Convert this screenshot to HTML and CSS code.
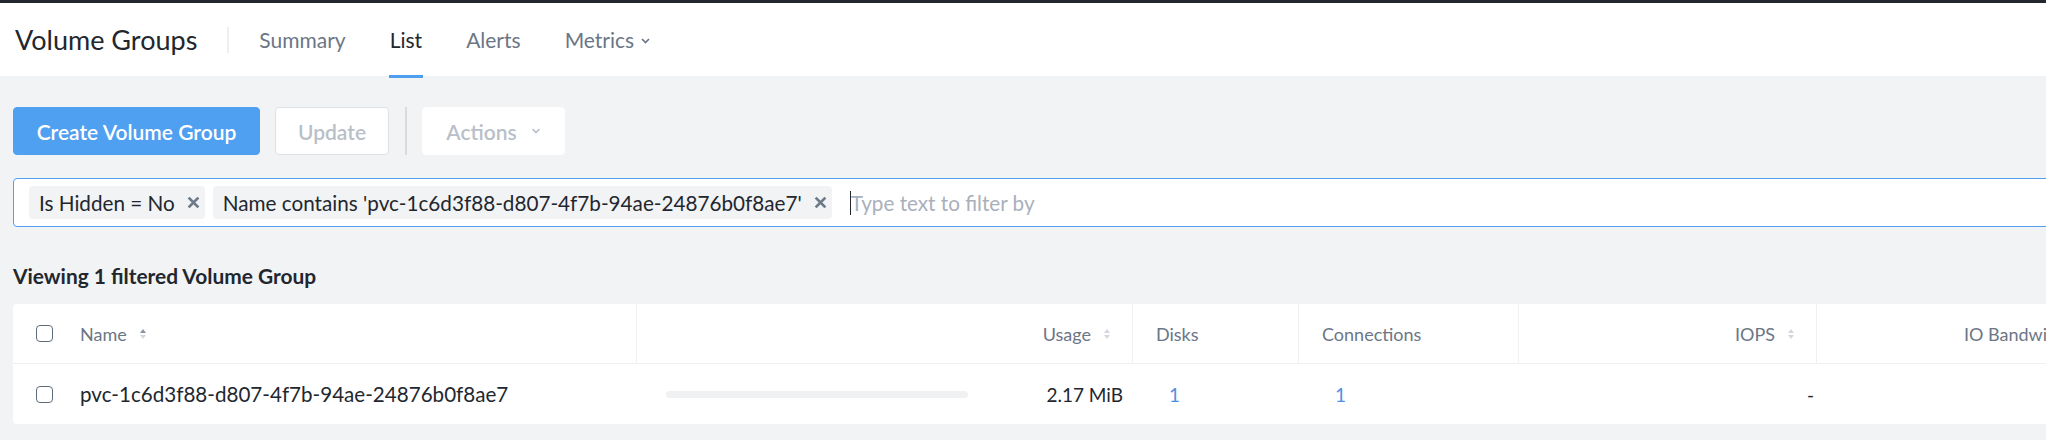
FILE: index.html
```html
<!DOCTYPE html>
<html>
<head>
<meta charset="utf-8">
<link rel="stylesheet" href="styles.css">
</head>
<body>
<div class="topbar"></div>
<header class="header">
  <div class="title">Volume Groups</div>
  <div class="vdivider"></div>
  <nav class="nav">
    <span class="nav-item">Summary</span>
    <span class="nav-item active">List</span>
    <span class="nav-item">Alerts</span>
    <span class="nav-item">Metrics <svg class="chev" width="9" height="6" viewBox="0 0 9 6"><path d="M1 1l3.5 3.5L8 1" fill="none" stroke="#6b7686" stroke-width="1.7"/></svg></span>
  </nav>
</header>
<main class="content">
  <div class="toolbar">
    <button class="btn btn-primary">Create Volume Group</button>
    <button class="btn btn-disabled">Update</button>
    <div class="tsep"></div>
    <button class="btn btn-actions">Actions <svg class="chev2" width="10" height="6" viewBox="0 0 10 6"><path d="M1.5 1l3.5 3.5L8.5 1" fill="none" stroke="#b9bfc8" stroke-width="1.7"/></svg></button>
  </div>
  <div class="filter">
    <span class="chip">Is Hidden = No <svg class="x" width="13" height="13" viewBox="0 0 12 12"><path d="M1.5 1.5l9 9M10.5 1.5l-9 9" stroke="#6f7a89" stroke-width="2.6" stroke-linecap="butt"/></svg></span>
    <span class="chip">Name contains 'pvc-1c6d3f88-d807-4f7b-94ae-24876b0f8ae7' <svg class="x" width="13" height="13" viewBox="0 0 12 12"><path d="M1.5 1.5l9 9M10.5 1.5l-9 9" stroke="#6f7a89" stroke-width="2.6" stroke-linecap="butt"/></svg></span>
    <span class="caret"></span><span class="placeholder">Type text to filter by</span>
  </div>
  <div class="viewing">Viewing 1 filtered Volume Group</div>
  <div class="table">
    <div class="row head">
      <div class="cell c-name"><span class="cb"></span><span class="hname">Name</span><span class="sort"><i class="up dark"></i><i class="down"></i></span></div>
      <div class="cell c-usage right">Usage <span class="sort"><i class="up"></i><i class="down"></i></span></div>
      <div class="cell c-disks">Disks</div>
      <div class="cell c-conn">Connections</div>
      <div class="cell c-iops right">IOPS <span class="sort"><i class="up"></i><i class="down"></i></span></div>
      <div class="cell c-bw">IO Bandwidth <span class="sort"><i class="up"></i><i class="down"></i></span></div>
    </div>
    <div class="row body">
      <div class="cell c-name"><span class="cb"></span><span class="vname">pvc-1c6d3f88-d807-4f7b-94ae-24876b0f8ae7</span></div>
      <div class="cell c-usage b-usage"><span class="bar"></span><span class="usage-val">2.17 MiB</span></div>
      <div class="cell c-disks b-link">1</div>
      <div class="cell c-conn b-link">1</div>
      <div class="cell c-iops b-iops">-</div>
      <div class="cell c-bw"></div>
    </div>
  </div>
</main>
</body>
</html>
```

FILE: styles.css
```css
html, body {
  margin: 0;
  padding: 0;
  overflow: hidden;
  background: #f2f3f5;
  font-family: Lato, "Liberation Sans", sans-serif;
  color: #22272e;
}
.topbar {
  height: 3px;
  background: #22272e;
}
.header {
  height: 73px;
  background: #fff;
  display: flex;
  align-items: center;
  padding-left: 15px;
}
.title {
  font-size: 27px;
  color: #22272e;
}
.vdivider {
  width: 2px;
  height: 26px;
  background: #eceef0;
  margin: 0 30px 0 30px;
}
.nav {
  display: flex;
  gap: 44px;
  height: 100%;
  align-items: center;
}
.nav-item {
  font-size: 21px;
  color: #6b7686;
  position: relative;
  height: 100%;
  display: flex;
  align-items: center;
}
.nav-item.active {
  color: #22272e;
}
.nav-item.active::after {
  content: "";
  position: absolute;
  left: -1px;
  right: -1px;
  bottom: -2px;
  height: 3px;
  background: #4f9ff0;
}
.chev {
  margin-left: 7px;
  margin-top: 3px;
}
.content {
  padding-left: 13px;
  width: 2200px;
}
.toolbar {
  display: flex;
  align-items: center;
  margin-top: 31px;
  height: 48px;
}
.btn {
  height: 48px;
  border-radius: 4px;
  font-family: inherit;
  font-size: 21px;
  font-weight: 600;
  padding: 0;
  border: 1px solid transparent;
  display: flex;
  align-items: center;
  justify-content: center;
}
.btn-primary {
  width: 247px;
  background: #4fa0f0;
  color: #fff;
  border-color: #4fa0f0;
}
.btn-disabled {
  width: 114px;
  margin-left: 15px;
  background: #fff;
  color: #b9bfc8;
  border-color: #dde0e4;
}
.tsep {
  width: 2px;
  height: 48px;
  background: #d8dbdf;
  margin: 0 15px 0 16px;
}
.btn-actions {
  width: 143px;
  background: #fff;
  color: #b9bfc8;
  border-color: #fff;
}
.chev2 {
  margin-left: 14px;
}
.filter {
  margin-top: 23px;
  height: 47px;
  border: 1px solid #4fa0f0;
  border-radius: 4px;
  background: #fff;
  display: flex;
  align-items: center;
  padding-left: 15px;
  gap: 8px;
}
.chip {
  height: 33px;
  background: #f2f3f5;
  border-radius: 4px;
  display: flex;
  align-items: center;
  padding: 0 5px 0 10px;
  font-size: 20.7px;
  color: #22272e;
}
.x {
  margin-left: 12px;
}
.caret {
  width: 1px;
  height: 24px;
  background: #22272e;
  margin-left: 10px;
}
.placeholder {
  font-size: 20.7px;
  color: #a9b0bb;
  margin-left: -8px;
}
.viewing {
  margin-top: 36px;
  font-size: 20.9px;
  font-weight: 700;
  color: #22272e;
  height: 41px;
}
.table {
  background: #fff;
  border-radius: 4px;
  width: 2200px;
}
.row {
  display: grid;
  grid-template-columns: 623px 496px 166px 220px 298px 400px;
}
.row.head {
  height: 59px;
  border-bottom: 1px solid #eef0f2;
}
.row.body {
  height: 60px;
}
.cell {
  display: flex;
  align-items: center;
  font-size: 18px;
  color: #6b7686;
}
.head .cell + .cell {
  border-left: 1px solid #eef0f2;
}
.c-name {
  padding-left: 23px;
}
.cb {
  width: 15px;
  height: 15px;
  border: 1.5px solid #5f6b7a;
  border-radius: 4px;
  margin-right: 27px;
}
.sort {
  display: inline-flex;
  flex-direction: column;
  gap: 2px;
  margin-left: 13px;
}
.sort i {
  display: block;
  width: 0;
  height: 0;
  border-left: 3px solid transparent;
  border-right: 3px solid transparent;
}
.sort i.up {
  border-bottom: 4px solid #d3d7dd;
}
.sort i.down {
  border-top: 4px solid #d3d7dd;
}
.sort i.up.dark {
  border-bottom-color: #8a94a3;
}
.right {
  justify-content: flex-end;
  padding-right: 22px;
}
.c-disks, .c-conn {
  padding-left: 23px;
}
.c-bw {
  padding-left: 147px;
  justify-content: flex-start;
}
.vname {
  font-size: 20.6px;
  color: #22272e;
}
.b-usage {
  justify-content: space-between;
  padding: 0 9px 0 30px;
}
.bar {
  width: 302px;
  height: 7px;
  border-radius: 4px;
  background: #f0f1f3;
}
.usage-val {
  font-size: 19px;
  color: #22272e;
}
.b-link {
  color: #4f8fe0;
  font-size: 19px;
  padding-left: 37px;
}
.b-iops {
  justify-content: flex-end;
  padding-right: 2px;
  color: #22272e;
  font-size: 19px;
}
```
